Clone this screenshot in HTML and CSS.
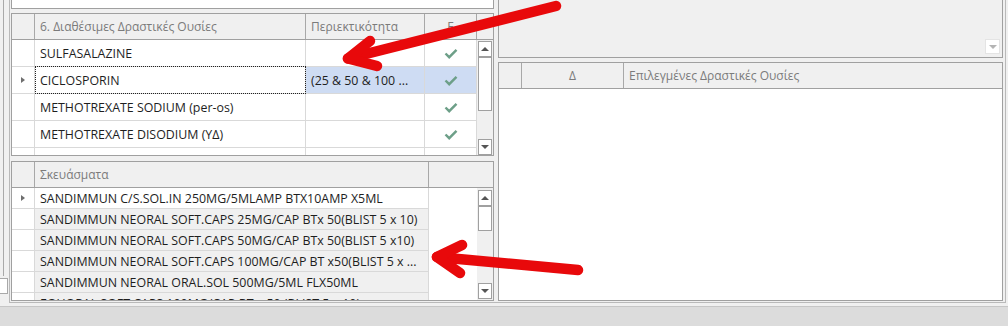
FILE: index.html
```html
<!DOCTYPE html>
<html lang="el">

<head>
    <meta charset="utf-8">
    <link rel="stylesheet" href="styles.css">
</head>

<body>
    <div class="window">
        <div class="workspace">
            <div class="side-strip">
                <div class="side-line"></div>
                <div class="side-box"></div>
            </div>

            <div class="pane pane--left">
                <div class="top-box"></div>

                <!-- available substances -->
                <div class="grid grid--substances">
                    <div class="grid__head">
                        <div class="cell cell--ind"></div>
                        <div class="cell cell--name">6. Διαθέσιμες Δραστικές Ουσίες</div>
                        <div class="cell cell--strength">Περιεκτικότητα</div>
                        <div class="cell cell--check cell--center">Ε</div>
                        <div class="cell cell--filler"></div>
                    </div>
                    <div class="grid__body">
                        <div class="grid__rows">
                            <div class="row">
                                <div class="cell cell--ind"></div>
                                <div class="cell cell--name">SULFASALAZINE</div>
                                <div class="cell cell--strength"></div>
                                <div class="cell cell--check cell--center">
                                    <svg class="tick" width="14" height="11" viewBox="0 0 14 11"><path d="M1.5 5.5 5.2 9.2 12.5 1.8" /></svg>
                                </div>
                            </div>
                            <div class="row row--current">
                                <div class="cell cell--ind cell--center"><span class="ind-arrow"></span></div>
                                <div class="cell cell--name cell--focus">CICLOSPORIN</div>
                                <div class="cell cell--strength cell--selected">(25 &amp; 50 &amp; 100 ...</div>
                                <div class="cell cell--check cell--center cell--selected">
                                    <svg class="tick" width="14" height="11" viewBox="0 0 14 11"><path d="M1.5 5.5 5.2 9.2 12.5 1.8" /></svg>
                                </div>
                            </div>
                            <div class="row">
                                <div class="cell cell--ind"></div>
                                <div class="cell cell--name">METHOTREXATE SODIUM (per-os)</div>
                                <div class="cell cell--strength"></div>
                                <div class="cell cell--check cell--center">
                                    <svg class="tick" width="14" height="11" viewBox="0 0 14 11"><path d="M1.5 5.5 5.2 9.2 12.5 1.8" /></svg>
                                </div>
                            </div>
                            <div class="row">
                                <div class="cell cell--ind"></div>
                                <div class="cell cell--name">METHOTREXATE DISODIUM (ΥΔ)</div>
                                <div class="cell cell--strength"></div>
                                <div class="cell cell--check cell--center">
                                    <svg class="tick" width="14" height="11" viewBox="0 0 14 11"><path d="M1.5 5.5 5.2 9.2 12.5 1.8" /></svg>
                                </div>
                            </div>
                            <div class="row">
                                <div class="cell cell--ind"></div>
                                <div class="cell cell--name"></div>
                                <div class="cell cell--strength"></div>
                                <div class="cell cell--check"></div>
                            </div>
                        </div>
                        <div class="scrollbar scrollbar--substances">
                            <div class="scroll-btn"><span class="caret caret--up"></span></div>
                            <div class="scroll-thumb"></div>
                            <div class="scroll-space"></div>
                            <div class="scroll-btn"><span class="caret caret--down"></span></div>
                        </div>
                    </div>
                </div>

                <!-- packages -->
                <div class="grid grid--packs">
                    <div class="grid__head">
                        <div class="cell cell--ind"></div>
                        <div class="cell cell--pack">Σκευάσματα</div>
                        <div class="cell cell--pack-filler"></div>
                    </div>
                    <div class="grid__body">
                        <div class="grid__rows">
                            <div class="row row--pack">
                                <div class="cell cell--ind cell--center"><span class="ind-arrow"></span></div>
                                <div class="cell cell--pack">SANDIMMUN C/S.SOL.IN 250MG/5MLAMP BTX10AMP X5ML</div>
                            </div>
                            <div class="row row--pack row--shaded">
                                <div class="cell cell--ind"></div>
                                <div class="cell cell--pack">SANDIMMUN NEORAL SOFT.CAPS 25MG/CAP BTx 50(BLIST 5 x 10)</div>
                            </div>
                            <div class="row row--pack row--shaded">
                                <div class="cell cell--ind"></div>
                                <div class="cell cell--pack">SANDIMMUN NEORAL SOFT.CAPS 50MG/CAP BTx 50(BLIST 5 x10)</div>
                            </div>
                            <div class="row row--pack row--shaded">
                                <div class="cell cell--ind"></div>
                                <div class="cell cell--pack">SANDIMMUN NEORAL SOFT.CAPS 100MG/CAP BT x50(BLIST 5 x ...</div>
                            </div>
                            <div class="row row--pack row--shaded">
                                <div class="cell cell--ind"></div>
                                <div class="cell cell--pack">SANDIMMUN NEORAL ORAL.SOL 500MG/5ML FLX50ML</div>
                            </div>
                            <div class="row row--pack row--shaded row--clipped">
                                <div class="cell cell--ind"></div>
                                <div class="cell cell--pack">EQUORAL SOFT.CAPS 100MG/CAP BT x 50 (BLIST 5 x 10)</div>
                            </div>
                        </div>
                        <div class="grid__empty"></div>
                        <div class="scrollbar scrollbar--packs">
                            <div class="scroll-btn"><span class="caret caret--up"></span></div>
                            <div class="scroll-thumb"></div>
                            <div class="scroll-space"></div>
                            <div class="scroll-btn"><span class="caret caret--down"></span></div>
                        </div>
                    </div>
                </div>
            </div>

            <div class="pane pane--right">
                <div class="filter-box">
                    <div class="drop-btn"><span class="caret caret--down caret--light"></span></div>
                </div>

                <!-- chosen substances -->
                <div class="grid grid--selected">
                    <div class="grid__head">
                        <div class="cell cell--ind"></div>
                        <div class="cell cell--delta cell--center">Δ</div>
                        <div class="cell cell--chosen">Επιλεγμένες Δραστικές Ουσίες</div>
                    </div>
                    <div class="grid__body"></div>
                </div>
            </div>
        </div>

        <div class="status-bar"></div>

        <!-- red annotation arrows drawn over the screenshot -->
        <svg class="annotations" width="1008" height="326" viewBox="0 0 1008 326">
            <path d="M556 6 348 58.5" />
            <path d="M370 41 348 58.5 377 66" />
            <path d="M578 270 437 257" />
            <path d="M462 245 437 257 460 273" />
        </svg>
    </div>
</body>

</html>
```

FILE: styles.css
```css
*,
*::after,
*::before {
    box-sizing: border-box;
}

body {
    margin: 0;
    background-color: #f0f0f0;
    font-family: "Open Sans", "Noto Sans", sans-serif;
    font-size: 12px;
    color: #222;
}

.window {
    position: relative;
    width: 1008px;
    height: 326px;
    overflow: hidden;
    display: flex;
    flex-direction: column;
}

.workspace {
    height: 307px;
    display: flex;
    border-bottom: 1px solid #c6c6c6;
}

.status-bar {
    flex: 1;
    background-color: #dcdcdc;
}

/* left edge, another control cut off */
.side-strip {
    width: 9px;
    display: flex;
    flex-direction: column;
}

.side-line {
    width: 4px;
    height: 276px;
    border-right: 1px solid #a9a9a9;
}

.side-box {
    width: 8px;
    height: 16px;
    margin-top: 2px;
    border: 1px solid #a9a9a9;
    border-left: none;
    background-color: #fff;
}

.pane {
    height: 303px;
    display: flex;
    flex-direction: column;
    border-bottom: 1px solid #b9b9b9;
}

.pane--left {
    width: 487px;
    padding: 0 2px 1px 1px;
    border-left: 1px solid #b9b9b9;
    gap: 4px;
}

.pane--right {
    width: 510px;
    padding: 0 2px 1px 2px;
    border-right: 1px solid #b9b9b9;
    gap: 4px;
}

.top-box {
    height: 9px;
    background-color: #fff;
    border: 1px solid #a0a0a0;
    border-top: none;
}

.filter-box {
    height: 58px;
    display: flex;
    align-items: flex-end;
    justify-content: flex-end;
    padding: 0 2px 3px 0;
    background-color: #f0f0f0;
    border: 1px solid #a0a0a0;
    border-top: none;
}

.drop-btn {
    width: 15px;
    height: 15px;
    display: flex;
    align-items: center;
    justify-content: center;
    background-color: #fff;
    border: 1px solid #e4e4e4;
}

/* grids */
.grid {
    display: flex;
    flex-direction: column;
    border: 1px solid #a0a0a0;
    background-color: #fff;
}

.grid--substances {
    height: 143px;
}

.grid--packs {
    height: 140px;
    margin-top: 1px;
}

.grid--selected {
    height: 239px;
}

.grid__head {
    height: 26px;
    flex: none;
    display: flex;
    background-color: #f0f0f0;
    border-bottom: 1px solid #a0a0a0;
    color: #7b7b7b;
}

.grid__head .cell {
    border-right: 1px solid #a8a8a8;
}

.grid__head .cell:last-child {
    border-right: none;
}

.grid__body {
    flex: 1;
    display: flex;
    overflow: hidden;
}

.grid__rows {
    display: flex;
    flex-direction: column;
    font-size: 12.4px;
    color: #1e1e1e;
}

.grid__empty {
    flex: 1;
}

.row {
    height: 27px;
    flex: none;
    display: flex;
    border-bottom: 1px solid #d9d9d9;
}

.row--pack {
    height: 21px;
}

.row--shaded {
    background-color: #f0f0f0;
}

.cell {
    flex: none;
    display: flex;
    align-items: center;
    padding-left: 5px;
    white-space: nowrap;
    overflow: hidden;
    border-right: 1px solid #d9d9d9;
}

.cell--center {
    justify-content: center;
    padding-left: 0;
}

.cell--ind {
    width: 23px;
    padding-left: 0;
    background-color: #fff;
}

.grid__head .cell--ind {
    background-color: #f0f0f0;
}

.cell--name {
    width: 271px;
}

.cell--strength {
    width: 119px;
}

.cell--check {
    width: 52px;
}

.cell--filler {
    width: 16px;
}

.cell--pack {
    width: 394px;
}

.cell--pack-filler {
    flex: 1;
}

.cell--delta {
    width: 102px;
}

.cell--chosen {
    flex: 1;
}

.cell--selected {
    background-color: #cedcf3;
}

.cell--focus {
    outline: 1px dotted #222;
    outline-offset: -1px;
}

.row--current .cell--focus {
    margin-top: -1px;
    height: 28px;
}

.ind-arrow {
    width: 0;
    height: 0;
    border-left: 4px solid #6e6e6e;
    border-top: 3.5px solid transparent;
    border-bottom: 3.5px solid transparent;
}

.tick path {
    fill: none;
    stroke: #6d9f88;
    stroke-width: 2.4;
}

/* scrollbars */
.scrollbar {
    width: 16px;
    flex: none;
    display: flex;
    flex-direction: column;
    padding: 1px 1px 0;
    background-color: #f0f0f0;
}

.scrollbar--packs {
    padding: 2px 1px 1px;
}

.scroll-btn {
    height: 16px;
    display: flex;
    align-items: center;
    justify-content: center;
    background-color: #fff;
    border: 1px solid #a0a0a0;
}

.scroll-thumb {
    height: 54px;
    background-color: #fff;
    border: 1px solid #a0a0a0;
}

.scrollbar--packs .scroll-thumb {
    height: 25px;
}

.scroll-space {
    flex: 1;
}

.caret {
    width: 0;
    height: 0;
    border-left: 4px solid transparent;
    border-right: 4px solid transparent;
}

.caret--up {
    border-bottom: 4px solid #555;
}

.caret--down {
    border-top: 4px solid #555;
}

.caret--light {
    border-top-color: #b4b4b4;
}

/* annotation overlay */
.annotations {
    position: absolute;
    top: 0;
    left: 0;
    pointer-events: none;
}

.annotations path {
    fill: none;
    stroke: #e8090b;
    stroke-width: 10.5;
    stroke-linecap: round;
    stroke-linejoin: round;
}
```
